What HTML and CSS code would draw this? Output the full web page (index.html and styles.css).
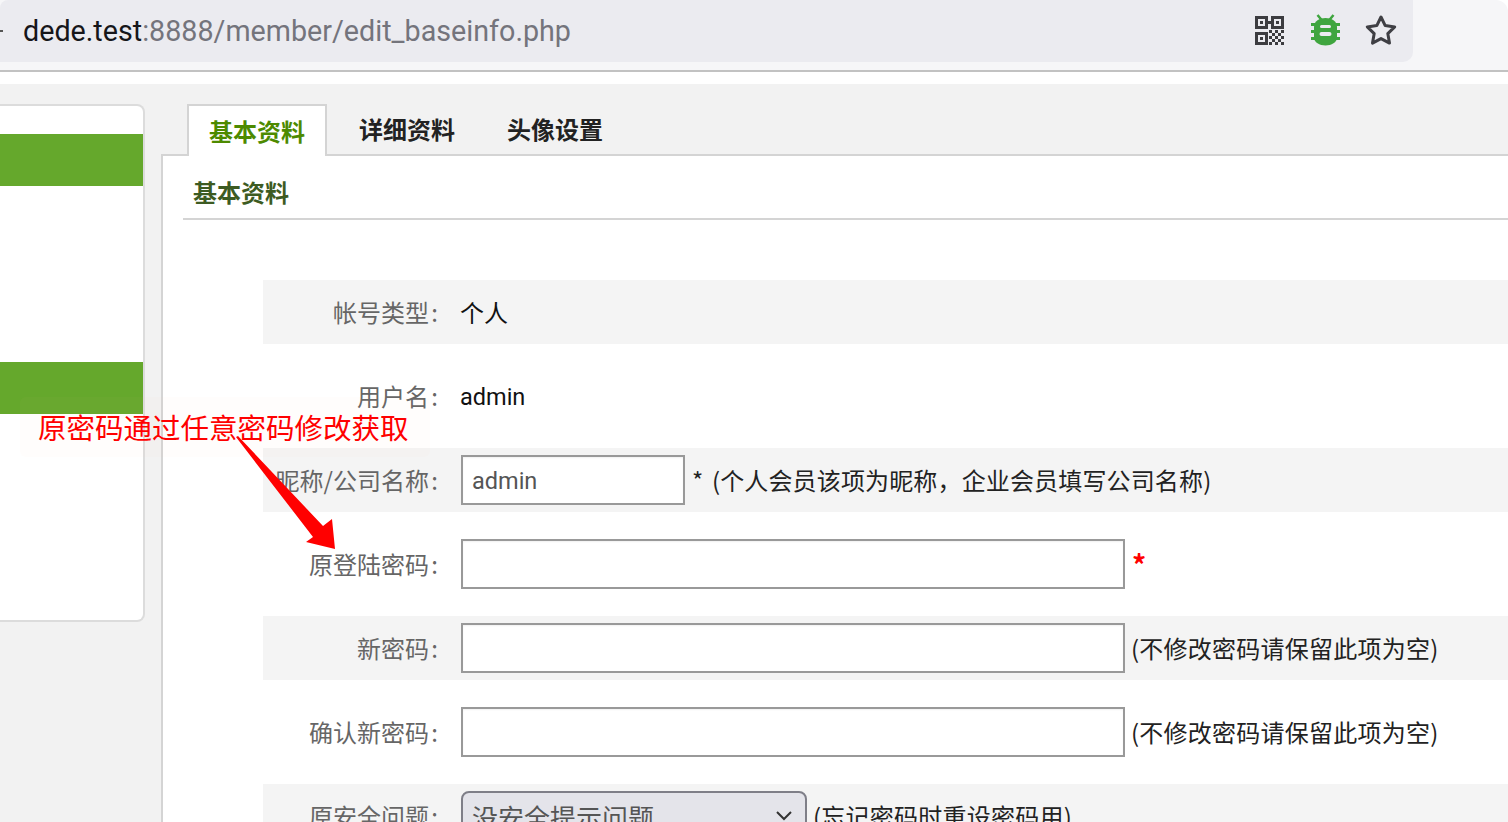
FILE: index.html
```html
<!DOCTYPE html>
<html lang="zh">
<head>
<meta charset="utf-8">
<title>基本资料</title>
<link rel="stylesheet" href="styles.css">
</head>
<body>
<div class="viewport">
  <header class="chrome">
    <div class="urlbar">
      <span class="back-tip"></span>
      <div class="url"><span class="host">dede.test</span><span class="path">:8888/member/edit_baseinfo.php</span></div>
      <div class="url-icons">
        <svg class="icon icon-qr" viewBox="0 0 29 29" width="29" height="29">
          <path fill="#3c3c40" fill-rule="evenodd" d="M0 0h13v13H0zM3 3v7h7V3zM16 0h13v13H16zM19 3v7h7V3zM0 16h13v13H0zM3 19v7h7v-7z"/>
          <path fill="#3c3c40" d="M5 5h3v3H5zM21 5h3v3h-3zM5 21h3v3H5zM13 5h3v3h-3zM14 14h3v3h-3zM17 17h3v3h-3zM20 14h3v3h-3zM23 17h3v3h-3zM26 14h3v3h-3zM14 20h3v3h-3zM20 20h3v3h-3zM26 20h3v3h-3zM17 23h3v3h-3zM23 23h3v3h-3zM14 26h3v3h-3zM20 26h3v3h-3zM26 26h3v3h-3z"/>
        </svg>
        <svg class="icon" viewBox="0 0 30 32" width="30" height="32">
          <path fill="none" stroke="#3fa53f" stroke-width="2.500" d="M6.500 1l5 6M22.500 1l-5 6"/>
          <path fill="#3fa53f" d="M3 13C3 7 8.500 4 14.500 4S26 7 26 13v11c0 4-5.500 7.500-11.500 7.500S3 28 3 24z"/>
          <path fill="#3fa53f" d="M0 9h4v3H0zM25 9h4v3h-4zM0 16h4v3H0zM25 16h4v3h-4zM0 23h4v3H0zM25 23h4v3h-4z"/>
          <path fill="#ebebf0" d="M10.500 11h8a1.500 1.500 0 0 1 0 3h-8a1.500 1.500 0 0 1 0-3zM10.500 18h8a1.500 1.500 0 0 1 0 4h-8a1.500 1.500 0 0 1 0-4z"/>
        </svg>
        <svg class="icon" viewBox="0 0 32 32" width="32" height="32">
          <path fill="none" stroke="#3f3f44" stroke-width="3" stroke-linejoin="round" d="M16 3l4.200 8.600 9.500 1.300-6.900 6.700 1.700 9.500-8.500-4.500-8.500 4.500 1.700-9.500-6.900-6.700 9.500-1.300z"/>
        </svg>
      </div>
    </div>
  </header>
  <div class="strip"></div>
  <main class="page">
    <aside class="sidebar">
      <div class="side-item"></div>
      <div class="side-item side-item-second"></div>
    </aside>
    <section class="content">
      <nav class="tabs">
        <a class="tab tab-active">基本资料</a>
        <a class="tab">详细资料</a>
        <a class="tab">头像设置</a>
      </nav>
      <div class="panel">
        <h2 class="section-title">基本资料</h2>
        <div class="rows">
          <div class="row row-alt">
            <label class="label">帐号类型<span class="colon">:</span></label>
            <span class="value">个人</span>
          </div>
          <div class="row">
            <label class="label">用户名<span class="colon">:</span></label>
            <span class="value value-latin">admin</span>
          </div>
          <div class="row row-alt">
            <label class="label">昵称/公司名称<span class="colon">:</span></label>
            <input class="input input-short" type="text" value="admin">
            <span class="hint hint-wide">* (个人会员该项为昵称，企业会员填写公司名称)</span>
          </div>
          <div class="row">
            <label class="label">原登陆密码<span class="colon">:</span></label>
            <input class="input input-long" type="password">
            <span class="required">*</span>
          </div>
          <div class="row row-alt">
            <label class="label">新密码<span class="colon">:</span></label>
            <input class="input input-long" type="password">
            <span class="hint hint-paren">(不修改密码请保留此项为空)</span>
          </div>
          <div class="row">
            <label class="label">确认新密码<span class="colon">:</span></label>
            <input class="input input-long" type="password">
            <span class="hint hint-paren">(不修改密码请保留此项为空)</span>
          </div>
          <div class="row row-alt">
            <label class="label">原安全问题<span class="colon">:</span></label>
            <div class="select">
              <span>没安全提示问题</span>
              <svg viewBox="0 0 16 10" width="16" height="10"><path d="M1 1l7 7 7-7" fill="none" stroke="#333" stroke-width="2"/></svg>
            </div>
            <span class="hint hint-paren">(忘记密码时重设密码用)</span>
          </div>
        </div>
      </div>
    </section>
  </main>
  <div class="note">原密码通过任意密码修改获取</div>
  <svg class="note-arrow" viewBox="0 0 1508 822" width="1508" height="822">
    <polygon fill="#ff0000" points="236,437 238,436 323,526 332,519 335,549 306,542 313,537"/>
  </svg>
</div>
</body>
</html>
```

FILE: styles.css
```css
* { box-sizing: border-box; }
html, body { margin: 0; padding: 0; background: #fff; }
body { font-family: "Noto Sans CJK SC", sans-serif; font-size: 24px; color: #111; }
.viewport { position: relative; width: 1508px; height: 822px; overflow: hidden; }

.chrome { height: 72px; background: #f6f6f8; border-bottom: 2px solid #c2c2c2; padding-bottom: 8px; border-radius: 0 12px 0 0; }
.urlbar { height: 62px; width: 1413px; background: #ebebf0; border-radius: 8px 0 10px 0; display: flex; align-items: center; padding-left: 23px; position: relative; }
.back-tip { position: absolute; left: 0; top: 30px; width: 3px; height: 2px; background: #555; }
.url { font-family: Roboto, "Liberation Sans", sans-serif; font-size: 28.7px; white-space: nowrap; flex: 1; }
.host { color: #16161a; }
.path { color: #74747c; }
.url-icons { display: flex; align-items: center; gap: 24px; padding-right: 16px; padding-bottom: 2px; }
.icon { display: block; }
.icon-qr { margin-right: 3px; }

.strip { height: 12px; background: #fff; }

.page { height: 738px; background: #f2f2f2; display: flex; padding-top: 20px; }
.sidebar { width: 145px; height: 518px; background: #fff; border: 2px solid #dcdcdc; border-left: 0; border-radius: 0 8px 8px 0; padding-top: 28px; flex: none; }
.side-item { height: 52px; background: #65a82c; }
.side-item-second { margin-top: 176px; }

.content { margin-left: 16px; flex: 1; min-width: 0; display: flex; flex-direction: column; }
.tabs { display: flex; padding-left: 26px; height: 52px; margin-bottom: -2px; position: relative; z-index: 1; font-weight: 700; }
.tab { display: block; padding: 0 26px; height: 52px; line-height: 50px; color: #222; }
.tab-active { padding: 0 20px; margin-right: 6px; background: #fff; border: 2px solid #d4d4d4; border-bottom: 0; color: #4d8a00; }

.panel { flex: 1; background: #fff; border-top: 2px solid #d4d4d4; border-left: 2px solid #d4d4d4; }
.section-title { margin: 0 0 0 20px; height: 64px; padding: 0 0 0 10px; border-bottom: 2px solid #d4d4d4; font-size: 24px; font-weight: 700; line-height: 72px; color: #3d5b22; }

.rows { margin: 60px 0 0 100px; display: flex; flex-direction: column; gap: 20px; }
.row { height: 64px; flex: none; display: flex; align-items: center; }
.row-alt { background: #f4f4f4; }
.label { width: 197px; padding-right: 20px; padding-bottom: 2px; text-align: right; color: #666; white-space: nowrap; flex: none; }
.colon { display: inline-block; width: 11px; text-align: center; }
.value { color: #111; padding-bottom: 2px; }
.value-latin { font-family: Roboto, "Liberation Sans", sans-serif; font-size: 23.5px; padding-bottom: 0; padding-top: 2px; }
.input { height: 50px; margin: 0 0 0 1px; padding: 2px 9px 0; border: 2px solid #999; background: #fff; font-family: Roboto, "Liberation Sans", sans-serif; font-size: 23.5px; color: #555; outline: 0; border-radius: 0; box-shadow: inset 0 1px 2px rgba(0, 0, 0, .06); flex: none; }
.input-short { width: 224px; }
.input-long { width: 664px; }
.hint { margin-left: 7px; padding-bottom: 2px; color: #222; letter-spacing: .25px; white-space: nowrap; }
.hint-paren { margin-left: 6px; }
.hint-wide { letter-spacing: .15px; word-spacing: 3px; }
.required { margin-left: 7px; color: #f00; font-size: 28px; font-weight: 700; }
.select { width: 346px; height: 50px; margin-left: 1px; padding: 0 13px 0 9px; border: 2px solid #7f7f88; border-radius: 8px; background: #e4e4ea; color: #555; font-size: 26px; display: flex; align-items: center; justify-content: space-between; flex: none; }

.note { position: absolute; left: 20px; top: 397px; width: 410px; height: 60px; padding-left: 18px; background: rgba(255, 200, 150, .03); border-radius: 6px; color: #f00; font-size: 28.5px; line-height: 60px; white-space: nowrap; }
.note-arrow { position: absolute; left: 0; top: 0; pointer-events: none; }
```
